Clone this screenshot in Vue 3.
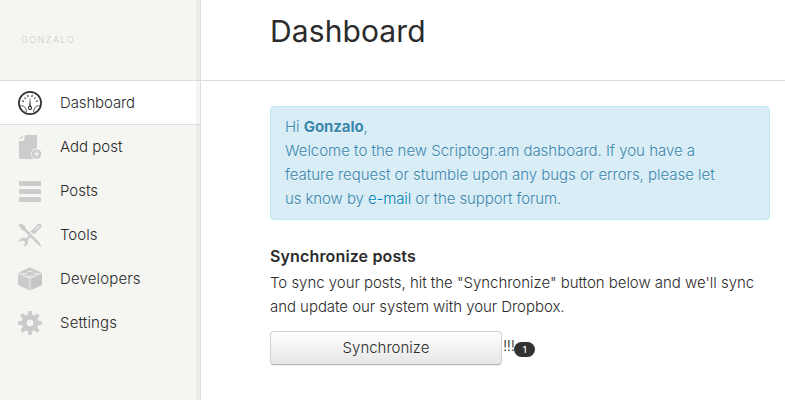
<script setup>
const items = [
  { id: 'dashboard', label: 'Dashboard' },
  { id: 'add', label: 'Add post' },
  { id: 'posts', label: 'Posts' },
  { id: 'tools', label: 'Tools' },
  { id: 'developers', label: 'Developers' },
  { id: 'settings', label: 'Settings' },
]
const active = 'dashboard'
const teeth = [0, 45, 90, 135, 180, 225, 270, 315]
</script>

<template>
  <div class="page">
    <aside class="sidebar">
      <div class="user">GONZALO</div>
      <nav>
        <a v-for="item in items" :key="item.id" class="item" :class="[item.id, { active: item.id === active }]">
          <svg v-if="item.id === 'dashboard'" class="icon" viewBox="0 0 24 24" fill="none" stroke="#333">
            <circle cx="12" cy="12" r="11.100" stroke-width="1.700" />
            <path d="M1.500 15Q6 14 8 18L8.500 21.500M22.500 15Q18 14 16 18L15.500 21.500" stroke-width=".8" />
            <path d="M4.200 9.800l1.800.8M6.500 6.500l1.300 1.500M9.700 4l.5 2M14.300 4l-.5 2M17.500 6.500L16.200 8M19.800 9.800l-1.800.8" stroke-width="1.100" />
            <path d="M12 6l.9 10h-1.800z" fill="#333" stroke="none" />
            <circle cx="12" cy="17" r="1.600" stroke-width="1.100" />
          </svg>
          <svg v-else-if="item.id === 'add'" class="icon" viewBox="0 0 24 24">
            <path d="M7 0H19v24H1V6h4.500Q6.500 4 7 0z" fill="#ccc" />
            <path d="M.8 4.300L5.300 0 4.300 3.300z" fill="#ccc" />
            <circle cx="18.500" cy="19" r="5.700" fill="#f5f5f1" />
            <circle cx="18.500" cy="19" r="4.800" fill="#ccc" />
            <path d="M18.500 16.500v5M16 19h5" stroke="#f5f5f1" stroke-width="1.400" />
          </svg>
          <svg v-else-if="item.id === 'posts'" class="icon" viewBox="0 0 24 24" fill="#ccc">
            <rect x="1" y="2" width="22" height="5" rx=".8" />
            <rect x="1" y="10" width="22" height="5" rx=".8" />
            <rect x="1" y="18" width="22" height="5" rx=".8" />
          </svg>
          <svg v-else-if="item.id === 'tools'" class="icon" viewBox="0 0 24 24" fill="#ccc">
            <path d="M.5 2L2.500.2 7.500 3.500 8 6l13.500 13.500L23.500 24l-4-2.500L6.500 8 4 7z" />
            <path d="M12.500 8.500L20 1q2.500-1 3.300.8.5 1.500-.3 2.700L16 11.500z" />
            <path d="M20.800 2.500l.8.8-4 4-.8-.8z" fill="#f5f5f1" />
            <path d="M10.500 12.500l1.800 1.800-2.300 2.700q.8 4-2 5.700l-2.500 1 1.700-4-1.700-2.200-4.500 1.500q0-3 3-4 2.500-.6 4.500.2z" />
          </svg>
          <svg v-else-if="item.id === 'developers'" class="icon" viewBox="0 0 24 24">
            <path d="M12 .3L23.500 5.500 12 10.500.5 5.500z" fill="#ccc" />
            <path d="M0 6.300l11.600 5.200v12L0 18z" fill="#ccc" />
            <path d="M24 6.300l-11.600 5.200v12L24 18z" fill="#c6c6c4" />
            <path fill="#f5f5f1" d="M9.700 3.500q2.300 1.500 4.600 0l-.3 1q-2 .9-4 0zM4.700 5.700q2.300 1.500 4.600 0l-.3 1q-2 .9-4 0zM14.700 5.700q2.300 1.500 4.600 0l-.3 1q-2 .9-4 0zM9.700 8q2.300 1.500 4.600 0l-.3 1q-2 .9-4 0z" />
          </svg>
          <svg v-else class="icon" viewBox="0 0 24 24" fill="#ccc">
            <path v-for="angle in teeth" :key="angle" d="M9.600 5L10.300 0h3.400l.7 5z" :transform="`rotate(${angle} 12 12)`" />
            <circle cx="12" cy="12" r="8.400" />
            <circle cx="12" cy="12" r="4.300" fill="none" stroke="#bfbfbf" stroke-width="1" />
            <circle cx="12" cy="12" r="3.500" fill="#f5f5f1" />
          </svg>
          <span class="label">{{ item.label }}</span>
        </a>
      </nav>
    </aside>
    <main>
      <header><h1>Dashboard</h1></header>
      <div class="content">
        <div class="alert">
          <p>Hi <strong>Gonzalo</strong>,</p>
          <p class="welcome">Welcome to the new Scriptogr.am dashboard. If you have a</p>
          <p class="request">feature request or stumble upon any bugs or errors, please let</p>
          <p class="contact">us know by <a>e-mail</a> or the support forum.</p>
        </div>
        <h2>Synchronize posts</h2>
        <p class="intro">To sync your posts, hit the "Synchronize" button below and we'll sync</p>
        <p class="intro-end">and update our system with your Dropbox.</p>
        <div class="actions">
          <button>Synchronize</button>
          <span class="marks">!!!</span>
          <span class="badge">1</span>
        </div>
      </div>
    </main>
  </div>
</template>

<style>
body { margin: 0; background: #fff; }
</style>

<style scoped>
.page {
  display: flex;
  width: 785px;
  height: 400px;
  overflow: hidden;
  color: #2b2b2b;
  font: 300 15px/24px Inter, "Liberation Sans", sans-serif;
}
.sidebar {
  box-sizing: border-box;
  width: 201px;
  flex: none;
  background: linear-gradient(to right, #f5f5f1 196px, #ecece8 196px, #ecece8 200px, #ddd 200px);
}
.user {
  box-sizing: border-box;
  height: 80px;
  padding: 28px 0 0 21px;
  color: #ccccc9;
  font-size: 9px;
  letter-spacing: 1.5px;
}
.item {
  display: flex;
  align-items: center;
  box-sizing: border-box;
  height: 44px;
  padding-left: 18px;
}
.item.active {
  height: 45px;
  border-top: 1px solid #ddd;
  border-bottom: 1px solid #ddd;
  background: linear-gradient(to right, #fff 196px, #f5f5f5 196px, #f5f5f5 200px, #ddd 200px);
}
.icon { display: block; width: 24px; height: 24px; margin-right: 18px; }
.label { white-space: nowrap; }
.active .label { letter-spacing: -.12px; }
.developers .label, .settings .label { letter-spacing: .15px; }
main { flex: 1; }
header {
  box-sizing: border-box;
  height: 81px;
  padding: 11px 0 0 69px;
  border-bottom: 1px solid #ddd;
}
h1 { margin: 0; font-size: 30px; line-height: 40px; font-weight: 400; letter-spacing: .1px; }
.content { padding: 25px 15px 0 69px; }
p { margin: 0; white-space: nowrap; }
.welcome { letter-spacing: -.02px; }
.request { letter-spacing: -.03px; }
.contact { letter-spacing: -.09px; }
.intro { letter-spacing: -.03px; }
.intro-end { letter-spacing: -.05px; }
.alert {
  box-sizing: border-box;
  height: 114px;
  padding: 8px 14px;
  border: 1px solid #bce8f1;
  border-radius: 4px;
  background: #d9edf7;
  color: #3a87ad;
  text-shadow: 0 1px 0 rgba(255, 255, 255, .5);
}
.alert strong { font-weight: 700; letter-spacing: -.1px; }
.alert a { color: #0080b5; }
h2 { margin: 24px 0 3px; font-size: 16px; line-height: 24px; font-weight: 600; letter-spacing: .14px; }
.actions { display: flex; margin-top: 12px; }
button {
  box-sizing: border-box;
  width: 232px;
  height: 34px;
  padding: 0;
  border: 1px solid #d0d0d0;
  border-bottom-color: #b3b3b3;
  border-radius: 4px;
  background: linear-gradient(#fff, #e6e6e6);
  box-shadow: 0 1px 1px rgba(0, 0, 0, .06);
  color: #2b2b2b;
  font: inherit;
}
.marks { width: 11px; padding: 3px 0 0 1px; white-space: nowrap; letter-spacing: -.4px; }
.badge {
  width: 21px;
  height: 15px;
  margin-top: 11px;
  border-radius: 8px;
  background: #333;
  color: #fff;
  font-size: 9px;
  line-height: 15px;
  font-weight: 500;
  text-align: center;
}
</style>
